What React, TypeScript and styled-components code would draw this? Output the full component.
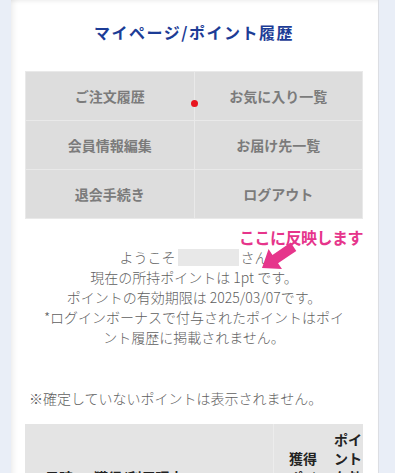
import React from 'react'
import styled, { createGlobalStyle } from 'styled-components'

const GlobalStyle = createGlobalStyle`
  body {
    margin: 0;
    background: #e9eef7;
    font-family: "Noto Sans CJK JP", "Noto Sans", sans-serif;
    overflow: hidden;
  }
`

const Page = styled.div`
  padding-left: 11px;
  width: 395px;
  box-sizing: border-box;
`

const Card = styled.div`
  width: 368px;
  min-height: 473px;
  box-sizing: border-box;
  background: #ffffff;
  border-right: 1px solid #dcdee3;
  box-shadow: inset 6px 0 6px -4px rgba(0, 0, 0, 0.08), inset 0 4px 4px -3px rgba(0, 0, 0, 0.08);
  padding: 20px 15px 0 14px;
`

const Title = styled.h1`
  margin: 0 0 27px;
  font-size: 16px;
  line-height: 24px;
  letter-spacing: 1.5px;
  font-weight: 700;
  color: #1c3c96;
  text-align: center;
`

const MenuGrid = styled.div`
  position: relative;
  display: grid;
  grid-template-columns: 1fr 1fr;
  gap: 1px;
  padding: 1px;
  background: #e9e9e9;
`

const MenuItem = styled.div`
  height: 48px;
  display: flex;
  align-items: center;
  justify-content: center;
  background: #dddddd;
  color: #7b7b7b;
  font-size: 14px;
  font-weight: 700;
`

const ClickDot = styled.span`
  position: absolute;
  left: 166px;
  top: 29px;
  width: 7px;
  height: 7px;
  border-radius: 50%;
  background: #e8141e;
`

const Info = styled.div`
  position: relative;
  margin-top: 28px;
  padding: 0 16px;
  text-align: center;
  font-size: 14px;
  line-height: 20px;
  font-weight: 300;
  color: #5f5f5f;
`

const NameBox = styled.span`
  display: inline-block;
  width: 61px;
  height: 17px;
  margin: 0 2px;
  vertical-align: -3px;
  background: #e8e8e8;
`

const Annotation = styled.div`
  position: absolute;
  right: 0;
  top: -20px;
  font-size: 16px;
  line-height: 20px;
  font-weight: 700;
  letter-spacing: -0.5px;
  color: #e6358b;
`

const ArrowMark = styled.svg`
  position: absolute;
  left: 225px;
  top: -7px;
`

const Notice = styled.p`
  margin: 41px 0 0;
  padding-left: 4px;
  font-size: 14px;
  line-height: 20px;
  font-weight: 300;
  color: #5f5f5f;
`

const Table = styled.div`
  margin-top: 16px;
  display: grid;
  grid-template-columns: 62px 186px 49px 41px;
  background: #e4e4e4;
`

const HeadCell = styled.div<{ $pl: number; $divider?: boolean }>`
  display: flex;
  align-items: center;
  padding: 6px 0 6px ${(p) => p.$pl}px;
  border-left: ${(p) => (p.$divider ? '1px solid #ececec' : 'none')};
  font-size: 14px;
  line-height: 19px;
  font-weight: 700;
  color: #222222;
  word-break: break-all;
`

export default function App(): React.ReactElement {
  const menu = ['ご注文履歴', 'お気に入り一覧', '会員情報編集', 'お届け先一覧', '退会手続き', 'ログアウト']

  return (
    <Page>
      <GlobalStyle />
      <Card>
        <Title>マイページ/ポイント履歴</Title>

        <MenuGrid>
          {menu.map((m) => (
            <MenuItem key={m}>{m}</MenuItem>
          ))}
          <ClickDot />
        </MenuGrid>

        <Info>
          <Annotation>ここに反映します</Annotation>
          <ArrowMark width="50" height="40" viewBox="0 0 50 40">
            <polygon
              transform="translate(12 28) rotate(-34)"
              points="0,0 16,-12 16,-5 38,-5 38,5 16,5 16,12"
              fill="#e6358b"
            />
          </ArrowMark>
          ようこそ<NameBox />さん
          <br />
          現在の所持ポイントは 1pt です。
          <br />
          ポイントの有効期限は 2025/03/07です。
          <br />
          *ログインボーナスで付与されたポイントはポイント履歴に掲載されません。
        </Info>

        <Notice>※確定していないポイントは表示されません。</Notice>

        <Table>
          <HeadCell $pl={20}>日時</HeadCell>
          <HeadCell $pl={7}>獲得/利用理由</HeadCell>
          <HeadCell $pl={15} $divider>獲得ポイント</HeadCell>
          <HeadCell $pl={12}>ポイント有効期限日</HeadCell>
        </Table>
      </Card>
    </Page>
  )
}
